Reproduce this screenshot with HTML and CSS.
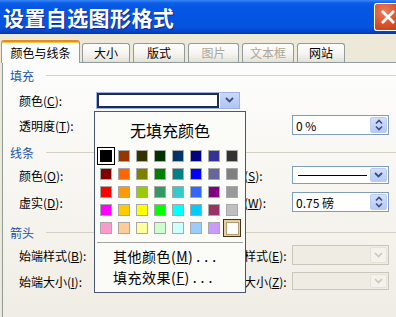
FILE: index.html
```html
<!DOCTYPE html>
<html lang="zh-CN">
<head>
<meta charset="utf-8">
<title>设置自选图形格式</title>
<link rel="stylesheet" href="styles.css">
</head>
<body>
<div class="window">
  <div class="titlebar">
    <span class="title">设置自选图形格式</span>
    <span class="close"><svg width="14" height="14" viewBox="0 0 14 14"><path d="M2 2L12 12M12 2L2 12" stroke="#fff" stroke-width="2.8" stroke-linecap="square"/></svg></span>
  </div>
  <div class="client">
    <div class="tabs">
      <div class="tab active t1">颜色与线条</div>
      <div class="tab t2">大小</div>
      <div class="tab t3">版式</div>
      <div class="tab t4 disabled">图片</div>
      <div class="tab t5 disabled">文本框</div>
      <div class="tab t6">网站</div>
    </div>
    <div class="panel">
      <div class="sec s1"><span>填充</span></div>
      <div class="row r1">
        <label>颜色(<u>C</u>):</label>
        <div class="colorpick">
          <span class="preview"></span>
          <span class="btn"><svg width="9" height="6" viewBox="0 0 9 6"><path d="M1 1L4.5 4.5L8 1" stroke="#3b4f7a" stroke-width="1.8" fill="none"/></svg></span>
        </div>
      </div>
      <div class="row r2">
        <label>透明度(<u>T</u>):</label>
        <div class="dd spin c4"><span class="val">0 %</span><span class="btn"><svg width="8" height="12" viewBox="0 0 8 12"><path d="M1 4.5L4 1.5L7 4.5M1 7.5L4 10.5L7 7.5" stroke="#3b4f7a" stroke-width="1.6" fill="none"/></svg></span></div>
      </div>
      <div class="sec s2"><span>线条</span></div>
      <div class="row r3">
        <label>颜色(<u>O</u>):</label>
        <div class="dd c2"><span class="btn"></span></div>
        <label class="rl">线型(<u>S</u>):</label>
        <div class="dd line c4"><span class="linesample"></span><span class="btn"><svg width="9" height="6" viewBox="0 0 9 6"><path d="M1 1L4.5 4.5L8 1" stroke="#3b4f7a" stroke-width="1.8" fill="none"/></svg></span></div>
      </div>
      <div class="row r4">
        <label>虚实(<u>D</u>):</label>
        <div class="dd c2"><span class="btn"></span></div>
        <label class="rl">粗细(<u>W</u>):</label>
        <div class="dd spin c4"><span class="val">0.75 磅</span><span class="btn"><svg width="8" height="12" viewBox="0 0 8 12"><path d="M1 4.5L4 1.5L7 4.5M1 7.5L4 10.5L7 7.5" stroke="#3b4f7a" stroke-width="1.6" fill="none"/></svg></span></div>
      </div>
      <div class="sec s3"><span>箭头</span></div>
      <div class="row r5">
        <label>始端样式(<u>B</u>):</label>
        <div class="dd disabled c2"><span class="btn"></span></div>
        <label class="rl">末端样式(<u>E</u>):</label>
        <div class="dd disabled c4"><span class="btn"><svg width="9" height="6" viewBox="0 0 9 6"><path d="M1 1L4.5 4.5L8 1" stroke="#cac8bb" stroke-width="1.6" fill="none"/></svg></span></div>
      </div>
      <div class="row r6">
        <label>始端大小(<u>I</u>):</label>
        <div class="dd disabled c2 short"><span class="btn"></span></div>
        <label class="rl">末端大小(<u>Z</u>):</label>
        <div class="dd disabled c4 short"><span class="btn"><svg width="9" height="6" viewBox="0 0 9 6"><path d="M1 1L4.5 4.5L8 1" stroke="#cac8bb" stroke-width="1.6" fill="none"/></svg></span></div>
      </div>

      <div class="popup">
        <div class="nofill">无填充颜色</div>
        <div class="palette">
          <span class="cell sel"><i style="background:#000000"></i></span>
          <span class="cell"><i style="background:#993300"></i></span>
          <span class="cell"><i style="background:#333300"></i></span>
          <span class="cell"><i style="background:#003300"></i></span>
          <span class="cell"><i style="background:#003366"></i></span>
          <span class="cell"><i style="background:#000080"></i></span>
          <span class="cell"><i style="background:#333399"></i></span>
          <span class="cell"><i style="background:#333333"></i></span>

          <span class="cell"><i style="background:#800000"></i></span>
          <span class="cell"><i style="background:#ff6600"></i></span>
          <span class="cell"><i style="background:#808000"></i></span>
          <span class="cell"><i style="background:#008000"></i></span>
          <span class="cell"><i style="background:#008080"></i></span>
          <span class="cell"><i style="background:#0000ff"></i></span>
          <span class="cell"><i style="background:#666699"></i></span>
          <span class="cell"><i style="background:#808080"></i></span>

          <span class="cell"><i style="background:#ff0000"></i></span>
          <span class="cell"><i style="background:#ff9900"></i></span>
          <span class="cell"><i style="background:#99cc00"></i></span>
          <span class="cell"><i style="background:#339966"></i></span>
          <span class="cell"><i style="background:#33cccc"></i></span>
          <span class="cell"><i style="background:#3366ff"></i></span>
          <span class="cell"><i style="background:#800080"></i></span>
          <span class="cell"><i style="background:#999999"></i></span>

          <span class="cell"><i style="background:#ff00ff"></i></span>
          <span class="cell"><i style="background:#ffcc00"></i></span>
          <span class="cell"><i style="background:#ffff00"></i></span>
          <span class="cell"><i style="background:#00ff00"></i></span>
          <span class="cell"><i style="background:#00ffff"></i></span>
          <span class="cell"><i style="background:#00ccff"></i></span>
          <span class="cell"><i style="background:#993366"></i></span>
          <span class="cell"><i style="background:#c0c0c0"></i></span>

          <span class="cell"><i style="background:#ff99cc"></i></span>
          <span class="cell"><i style="background:#ffcc99"></i></span>
          <span class="cell"><i style="background:#ffff99"></i></span>
          <span class="cell"><i style="background:#ccffcc"></i></span>
          <span class="cell"><i style="background:#ccffff"></i></span>
          <span class="cell"><i style="background:#99ccff"></i></span>
          <span class="cell"><i style="background:#cc99ff"></i></span>
          <span class="cell hover"><i style="background:#ffffff"></i></span>
        </div>
        <div class="sep"></div>
        <div class="item i1">其他颜色(<u>M</u>)<span class="dots">...</span></div>
        <div class="item">填充效果(<u>F</u>)<span class="dots">...</span></div>
      </div>
    </div>
  </div>
</div>
</body>
</html>
```
FILE: styles.css
```css
html, body {
  margin: 0;
  padding: 0;
}
body {
  width: 396px;
  height: 317px;
  overflow: hidden;
  background: #ece9d8;
  font-family: "Noto Sans CJK SC", sans-serif;
  font-size: 12px;
  color: #000;
}
.window {
  width: 396px;
  height: 317px;
  overflow: hidden;
}

/* title bar */
.titlebar {
  box-sizing: border-box;
  height: 34px;
  display: flex;
  align-items: center;
  justify-content: space-between;
  padding-left: 3px;
  background: linear-gradient(#3a86f4 0, #0a5fe8 3px, #0556e3 8px, #0454e0 27px, #0346cf 31px, #0336a8 34px);
}
.title {
  color: #fff;
  font-size: 21px;
  font-weight: bold;
  letter-spacing: 0.4px;
  line-height: 34px;
  text-shadow: 1px 1px 0 #0b2a8a;
}
.close {
  box-sizing: border-box;
  flex: none;
  width: 22px;
  height: 28px;
  border: 1px solid #fff;
  border-right: none;
  border-radius: 3px 0 0 3px;
  background: radial-gradient(circle at 45% 30%, #ea7f5e, #d8532b 60%, #c0401a);
  display: flex;
  align-items: center;
  justify-content: flex-end;
  padding-right: 1px;
}

/* tabs */
.client {
  padding-top: 6px;
}
.tabs {
  display: flex;
  align-items: flex-end;
  height: 22px;
  padding-left: 1px;
  position: relative;
  z-index: 2;
}
.tab {
  box-sizing: border-box;
  height: 19px;
  border: 1px solid #919b9c;
  border-bottom: none;
  border-radius: 3px 3px 0 0;
  background: linear-gradient(#fefefe, #f5f4ef 55%, #e3e1d7);
  text-align: center;
  line-height: 18px;
  margin-left: 3px;
}
.tab.active {
  height: 23px;
  margin-bottom: -1px;
  margin-left: 0;
  background: #fcfcfd;
  border-top: 2px solid #e68b2c;
  box-shadow: inset 0 1px 0 #ffc73c;
  line-height: 21px;
}
.tab.disabled { color: #aca899; }
.t1 { width: 79px; }
.t2 { width: 48px; margin-left: 2px; }
.t3 { width: 52px; }
.t4 { width: 51px; }
.t5 { width: 52px; }
.t6 { width: 48px; }

/* panel */
.panel {
  position: relative;
  box-sizing: border-box;
  margin-left: 2px;
  width: 394px;
  height: 255px;
  border: 1px solid #919b9c;
  border-right: none;
  border-bottom: none;
  background: linear-gradient(#fdfdfd, #f7f6f1 45%, #efede4);
}
.sec {
  display: flex;
  align-items: center;
  gap: 12px;
  height: 16px;
  padding-left: 7px;
  color: #2452a8;
}
.sec::after {
  content: "";
  flex: 1;
  height: 1px;
  background: #d3d1c4;
}
.s1 { margin-top: 4px; }
.s2 { margin-top: 7px; }
.s3 { margin-top: 10px; }

.row {
  display: grid;
  grid-template-columns: 77px 124px 72px 97px;
  align-items: center;
  height: 24px;
  padding-left: 16px;
}
.r1 { margin-top: 5px; }
.r2 { margin-top: 1px; }
.r3 { margin-top: 3px; }
.r4 { margin-top: 3px; }
.r5 { margin-top: 3px; }
.r6 { margin-top: 2px; }
.row label { white-space: nowrap; }
.row .rl { grid-column: 3; }
.c2 { grid-column: 2; width: 118px; }
.c4 { grid-column: 4; }

/* colour picker button */
.colorpick {
  grid-column: 2 / span 2;
  box-sizing: border-box;
  width: 144px;
  height: 17px;
  display: flex;
  border: 1px solid #9db2dc;
  background: #fff;
}
.preview {
  flex: 1;
  margin: 0 1px 0 0;
  border: 2px solid #1d2c55;
  background: #fff;
}
.colorpick .btn {
  width: 19px;
  background: linear-gradient(#c9d8fb, #b0c5f4);
  display: flex;
  align-items: center;
  justify-content: center;
}

/* dropdowns & spinners */
.dd {
  box-sizing: border-box;
  height: 20px;
  border: 1px solid #7f9db9;
  background: #fff;
  display: flex;
  align-items: stretch;
}
.dd .btn {
  margin: 1px 1px 1px auto;
  width: 17px;
  border-radius: 2px;
  background: linear-gradient(#d2defc, #b6caf6);
  border: 1px solid #bccbf0;
  box-sizing: border-box;
  display: flex;
  align-items: center;
  justify-content: center;
}
.dd.line { height: 18px; }
.linesample {
  flex: 1;
  align-self: center;
  height: 1px;
  margin: 0 3px 0 5px;
  background: #000;
}
.val {
  align-self: center;
  padding-left: 3px;
  white-space: nowrap;
}
.dd.disabled {
  background: #eeece3;
  border-color: #c9c7ba;
}
.dd.disabled .btn {
  background: #f3f2ec;
  border-color: #e4e2d9;
}
.dd.short { height: 18px; }

/* popup palette */
.popup {
  position: absolute;
  left: 91px;
  top: 48px;
  z-index: 3;
  box-sizing: border-box;
  width: 152px;
  height: 182px;
  border: 1px solid #4b5672;
  background: #fbfbf8;
}
.nofill {
  height: 35px;
  line-height: 36px;
  text-align: center;
  font-size: 16px;
}
.palette {
  display: grid;
  grid-template-columns: repeat(8, 18px);
  grid-template-rows: repeat(5, 18px);
  margin-left: 2px;
}
.cell {
  box-sizing: border-box;
  display: flex;
  align-items: center;
  justify-content: center;
  border: 1px solid transparent;
}
.cell i {
  box-sizing: border-box;
  width: 12px;
  height: 12px;
  border: 1px solid #a8a8a8;
}
.cell.sel { border-color: #000; }
.cell.sel i { border-color: #000; }
.cell.hover {
  border: 1px solid #4a3014;
  background: #e6cfa6;
}
.cell.hover i { width: 13px; height: 13px; border-color: #b59b70; }
.sep {
  margin: 5px 2px 0 2px;
  height: 1px;
  background: #a5a5a0;
}
.item {
  height: 21px;
  line-height: 21px;
  padding-left: 18px;
  font-size: 14px;
  letter-spacing: 0.5px;
  white-space: nowrap;
}
.item.i1 { margin-top: 3px; }
.dots {
  letter-spacing: 4px;
  margin-left: 3px;
}
```
